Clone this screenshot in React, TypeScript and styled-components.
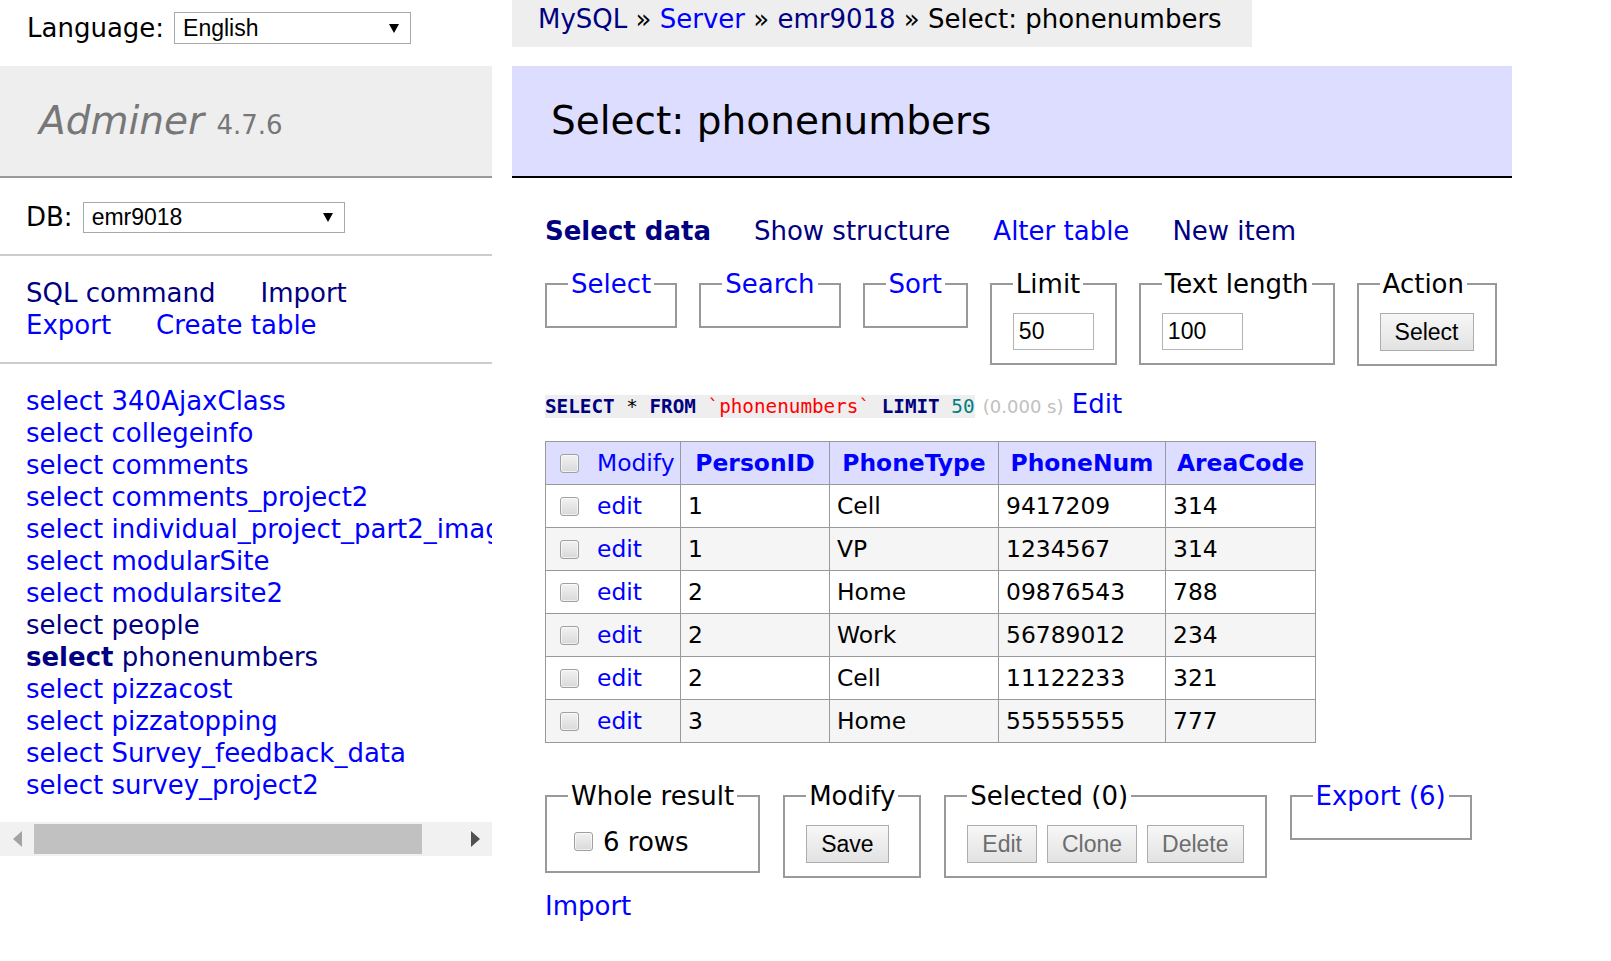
import React from "react";
import styled, { createGlobalStyle } from "styled-components";

const GlobalStyle = createGlobalStyle`
  html, body {
    margin: 0;
    padding: 0;
    background: #fff;
  }
  body {
    color: #000;
    font-family: "DejaVu Sans", Verdana, sans-serif;
    font-size: 26px;
    line-height: 32px;
  }
`;

const BLUE = "#0000ff";
const NAVY = "#000080";

const A = styled.a<{ $visited?: boolean; $bold?: boolean }>`
  color: ${(p) => (p.$visited ? NAVY : BLUE)};
  font-weight: ${(p) => (p.$bold ? "bold" : "normal")};
  text-decoration: none;
  cursor: pointer;
`;

const Page = styled.div`
  display: flex;
  align-items: flex-start;
`;

// sidebar

const Menu = styled.div`
  width: 492px;
  flex: none;
`;

const LangBar = styled.div`
  height: 56px;
  margin-bottom: 10px;
  display: flex;
  align-items: center;
  gap: 10px;
  padding-left: 27px;
`;

const FakeSelect = styled.div<{ $w: number; $h: number }>`
  box-sizing: border-box;
  width: ${(p) => p.$w}px;
  height: ${(p) => p.$h}px;
  border: 1px solid #a9a9a9;
  background: #fff;
  display: flex;
  align-items: center;
  justify-content: space-between;
  padding: 0 11px 0 8px;
  font-family: "Liberation Sans", Arial, sans-serif;
  font-size: 23px;
  line-height: 1;
`;

const Logo = styled.h1`
  margin: 0;
  padding: 31px 39px;
  line-height: 48px;
  font-size: 39px;
  font-weight: normal;
  color: #777;
  background: #eee;
  border-bottom: 2px solid #999;
  white-space: nowrap;
`;

const LogoName = styled.a`
  color: #777;
  font-style: italic;
  text-decoration: none;
`;

const Version = styled.span`
  font-size: 26px;
  line-height: 1;
  color: #777;
`;

const MenuBlock = styled.div<{ $top?: number }>`
  padding: ${(p) => p.$top ?? 21}px 26px 21px;
  border-bottom: 2px solid #ccc;
`;

const DbRow = styled.div`
  display: flex;
  align-items: center;
  gap: 10px;
  height: 32px;
`;

const LinkRow = styled.div`
  display: flex;
  column-gap: 45px;
  white-space: nowrap;
`;

const TableList = styled.ul`
  list-style: none;
  margin: 0;
  padding: 21px 26px 21px;
  overflow: hidden;
  white-space: nowrap;
`;

const TableItem = styled.li`
  line-height: 32px;
`;

const HScroll = styled.div`
  height: 34px;
  background: #f1f1f1;
  display: flex;
  align-items: center;
`;

const ScrollArrow = styled.div`
  width: 34px;
  height: 34px;
  display: flex;
  align-items: center;
  justify-content: center;
  flex: none;
`;

const Thumb = styled.div`
  width: 388px;
  height: 30px;
  background: #c1c1c1;
  flex: none;
`;

const Spacer = styled.div`
  flex: 1;
`;

// main

const Main = styled.div`
  margin-left: 20px;
  width: 1000px;
  flex: none;
`;

const Breadcrumb = styled.div`
  width: fit-content;
  height: 47px;
  line-height: 39px;
  padding: 0 30px 0 26px;
  background: #eee;
  white-space: nowrap;
`;

const Title = styled.h2`
  margin: 19px 0 0;
  padding: 31px 39px;
  line-height: 48px;
  font-size: 39px;
  font-weight: normal;
  background: #ddf;
  border-bottom: 2px solid #000;
`;

const Content = styled.div`
  padding-left: 33px;
`;

const Tabs = styled.div`
  margin-top: 37px;
  display: flex;
  column-gap: 43px;
  white-space: nowrap;
`;

const FieldRow = styled.div<{ $gap: number; $top: number }>`
  display: flex;
  align-items: flex-start;
  gap: ${(p) => p.$gap}px;
  margin-top: ${(p) => p.$top}px;
`;

const Box = styled.fieldset`
  margin: 0;
  padding: 13px 21px;
  border: 2px solid #999;
  min-width: 0;
  white-space: nowrap;
`;

const Legend = styled.legend`
  padding: 0 3px;
  font-size: 26px;
  line-height: 32px;
`;

const NumInput = styled.input`
  display: block;
  box-sizing: border-box;
  width: 81px;
  height: 37px;
  margin: 0;
  padding: 0 5px;
  border: 1px solid #b4b4b4;
  font-family: "Liberation Sans", Arial, sans-serif;
  font-size: 23px;
  color: #000;
`;

const Button = styled.button`
  display: block;
  box-sizing: border-box;
  height: 38px;
  margin: 0;
  padding: 0 14px;
  border: 1px solid #adadad;
  border-radius: 0;
  background: linear-gradient(#f7f7f7, #e2e2e2);
  font-family: "Liberation Sans", Arial, sans-serif;
  font-size: 23px;
  color: #000;
  &:disabled {
    color: #6d6d6d;
  }
`;

const ButtonGroup = styled.div`
  display: flex;
  gap: 10px;
`;

const Query = styled.p`
  margin: 22px 0 0;
  white-space: nowrap;
`;

const Code = styled.code`
  font-family: "DejaVu Sans Mono", "Liberation Mono", monospace;
  font-size: 19.3px;
  background: #eee;
`;

const Kw = styled.span`
  color: ${NAVY};
  font-weight: bold;
`;

const Str = styled.span`
  color: red;
`;

const Num = styled.span`
  color: #007f7f;
`;

const Time = styled.span`
  color: silver;
  font-size: 18px;
`;

const Grid = styled.table`
  margin-top: 18px;
  border-collapse: collapse;
  table-layout: fixed;
  width: 770px;
  font-size: 23.4px;
  line-height: 32px;
  tbody tr:nth-child(2n) {
    background: #f5f5f5;
  }
`;

const Col = styled.col<{ $w: number }>`
  width: ${(p) => p.$w}px;
`;

const Th = styled.th`
  background: #ddf;
  border: 1px solid #999;
  padding: 5px 8px;
  text-align: center;
  white-space: nowrap;
`;

const HeadCell = styled.td`
  background: #ddf;
  border: 1px solid #999;
  padding: 5px 7px;
  white-space: nowrap;
`;

const Td = styled.td`
  border: 1px solid #999;
  padding: 5px 7px;
  white-space: nowrap;
`;

const Check = styled.span<{ $ml?: number; $mr?: number }>`
  display: inline-block;
  box-sizing: border-box;
  width: 19px;
  height: 19px;
  margin: 0 ${(p) => p.$mr ?? 18}px 0 ${(p) => p.$ml ?? 7}px;
  border: 1px solid #a0a0a0;
  border-radius: 3px;
  background: linear-gradient(#f2f2f2, #d9d9d9);
  box-shadow: inset 0 0 0 1px rgba(255, 255, 255, 0.6);
  vertical-align: -2px;
`;

const RowsLabel = styled.label`
  display: flex;
  align-items: center;
  height: 33px;
`;

const ImportLine = styled.p`
  margin: 12px 0 0;
`;

const Caret = () => (
  <svg width="10" height="9" viewBox="0 0 10 9">
    <polygon points="0,0 10,0 5,9" fill="#000" />
  </svg>
);

const ArrowIcon = ({ dir, color }: { dir: "left" | "right"; color: string }) => (
  <svg width="9" height="16" viewBox="0 0 9 16">
    <polygon
      points={dir === "left" ? "9,0 9,16 0,8" : "0,0 0,16 9,8"}
      fill={color}
    />
  </svg>
);

const tables: { name: string; visited?: boolean; active?: boolean }[] = [
  { name: "340AjaxClass" },
  { name: "collegeinfo" },
  { name: "comments" },
  { name: "comments_project2" },
  { name: "individual_project_part2_images" },
  { name: "modularSite" },
  { name: "modularsite2" },
  { name: "people", visited: true },
  { name: "phonenumbers", visited: true, active: true },
  { name: "pizzacost" },
  { name: "pizzatopping" },
  { name: "Survey_feedback_data" },
  { name: "survey_project2" },
];

const rows = [
  ["1", "Cell", "9417209", "314"],
  ["1", "VP", "1234567", "314"],
  ["2", "Home", "09876543", "788"],
  ["2", "Work", "56789012", "234"],
  ["2", "Cell", "11122233", "321"],
  ["3", "Home", "55555555", "777"],
];

const columns = ["PersonID", "PhoneType", "PhoneNum", "AreaCode"];
const colWidths = [135, 149, 169, 167, 150];

export default function App() {
  return (
    <>
      <GlobalStyle />
      <Page>
        <Menu>
          <LangBar>
            <span>Language:</span>
            <FakeSelect $w={237} $h={32}>
              <span>English</span>
              <Caret />
            </FakeSelect>
          </LangBar>

          <Logo>
            <LogoName>Adminer</LogoName> <Version>4.7.6</Version>
          </Logo>

          <MenuBlock $top={23}>
            <DbRow>
              <span>DB:</span>
              <FakeSelect $w={262} $h={31}>
                <span>emr9018</span>
                <Caret />
              </FakeSelect>
            </DbRow>
          </MenuBlock>

          <MenuBlock>
            <LinkRow>
              <A $visited>SQL command</A>
              <A $visited>Import</A>
            </LinkRow>
            <LinkRow>
              <A>Export</A>
              <A>Create table</A>
            </LinkRow>
          </MenuBlock>

          <TableList>
            {tables.map((t) => (
              <TableItem key={t.name}>
                <A $visited={t.visited} $bold={t.active}>
                  select
                </A>{" "}
                <A $visited={t.visited}>{t.name}</A>
              </TableItem>
            ))}
          </TableList>

          <HScroll>
            <ScrollArrow>
              <ArrowIcon dir="left" color="#a3a3a3" />
            </ScrollArrow>
            <Thumb />
            <Spacer />
            <ScrollArrow>
              <ArrowIcon dir="right" color="#505050" />
            </ScrollArrow>
          </HScroll>
        </Menu>

        <Main>
          <Breadcrumb>
            <A $visited>MySQL</A> » <A>Server</A> » <A $visited>emr9018</A> »
            Select: phonenumbers
          </Breadcrumb>

          <Title>Select: phonenumbers</Title>

          <Content>
            <Tabs>
              <A $visited $bold>
                Select data
              </A>
              <A $visited>Show structure</A>
              <A>Alter table</A>
              <A $visited>New item</A>
            </Tabs>

            <FieldRow $gap={22} $top={21}>
              <Box>
                <Legend>
                  <A>Select</A>
                </Legend>
              </Box>
              <Box>
                <Legend>
                  <A>Search</A>
                </Legend>
              </Box>
              <Box>
                <Legend>
                  <A>Sort</A>
                </Legend>
              </Box>
              <Box>
                <Legend>Limit</Legend>
                <NumInput defaultValue="50" />
              </Box>
              <Box>
                <Legend>Text length</Legend>
                <NumInput defaultValue="100" />
              </Box>
              <Box>
                <Legend>Action</Legend>
                <Button>Select</Button>
              </Box>
            </FieldRow>

            <Query>
              <Code>
                <Kw>SELECT</Kw> * <Kw>FROM</Kw> <Str>`phonenumbers`</Str>{" "}
                <Kw>LIMIT</Kw> <Num>50</Num>
              </Code>{" "}
              <Time>(0.000 s)</Time> <A>Edit</A>
            </Query>

            <Grid>
              <colgroup>
                {colWidths.map((w, i) => (
                  <Col key={i} $w={w} />
                ))}
              </colgroup>
              <thead>
                <tr>
                  <HeadCell>
                    <Check />
                    <A>Modify</A>
                  </HeadCell>
                  {columns.map((c) => (
                    <Th key={c}>
                      <A $bold>{c}</A>
                    </Th>
                  ))}
                </tr>
              </thead>
              <tbody>
                {rows.map((r, i) => (
                  <tr key={i}>
                    <Td>
                      <Check />
                      <A>edit</A>
                    </Td>
                    {r.map((v, j) => (
                      <Td key={j}>{v}</Td>
                    ))}
                  </tr>
                ))}
              </tbody>
            </Grid>

            <FieldRow $gap={23} $top={37}>
              <Box>
                <Legend>Whole result</Legend>
                <RowsLabel>
                  <Check $ml={6} $mr={10} />6 rows
                </RowsLabel>
              </Box>
              <Box>
                <Legend>Modify</Legend>
                <Button>Save</Button>
              </Box>
              <Box>
                <Legend>Selected (0)</Legend>
                <ButtonGroup>
                  <Button disabled>Edit</Button>
                  <Button disabled>Clone</Button>
                  <Button disabled>Delete</Button>
                </ButtonGroup>
              </Box>
              <Box>
                <Legend>
                  <A>Export (6)</A>
                </Legend>
              </Box>
            </FieldRow>

            <ImportLine>
              <A>Import</A>
            </ImportLine>
          </Content>
        </Main>
      </Page>
    </>
  );
}
